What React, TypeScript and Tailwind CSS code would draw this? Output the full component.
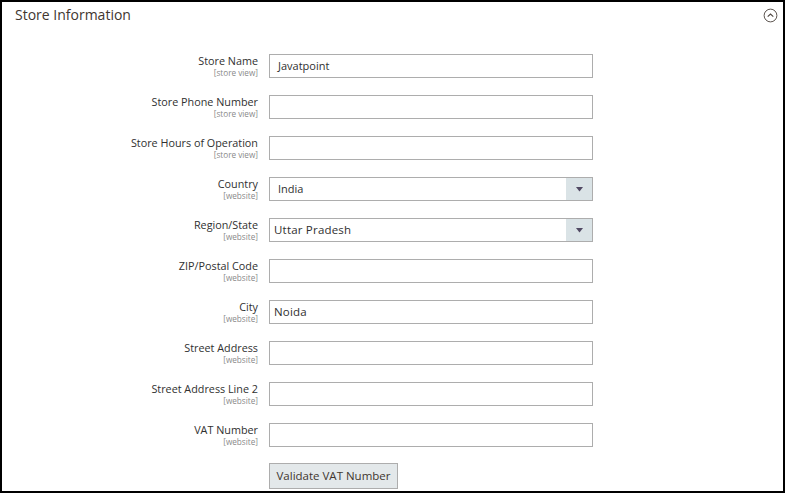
type Field = {
  label: string
  scope: string
  value?: string
  select?: boolean
  plain?: boolean
}

const FIELDS: Field[] = [
  { label: 'Store Name', scope: '[store view]', value: 'Javatpoint' },
  { label: 'Store Phone Number', scope: '[store view]' },
  { label: 'Store Hours of Operation', scope: '[store view]' },
  { label: 'Country', scope: '[website]', value: 'India', select: true },
  { label: 'Region/State', scope: '[website]', value: 'Uttar Pradesh', select: true, plain: true },
  { label: 'ZIP/Postal Code', scope: '[website]' },
  { label: 'City', scope: '[website]', value: 'Noida', plain: true },
  { label: 'Street Address', scope: '[website]' },
  { label: 'Street Address Line 2', scope: '[website]' },
  { label: 'VAT Number', scope: '[website]' },
]

function FieldRow({ field }: { field: Field }) {
  return (
    <div className="flex items-start gap-[11px] mb-[17px]">
      <div className="w-[256px] pt-[1px] text-right">
        <p className="text-[10.8px] leading-[12px] text-[#303030]">{field.label}</p>
        <p className="text-[8.2px] leading-[11px] text-[#8a8a8a]">{field.scope}</p>
      </div>
      <div className="relative flex h-[24px] w-[324px] items-center border border-[#adadad] bg-white">
        <span
          className={`text-[#303030] ${
            field.plain ? 'pl-[4px] text-[11.5px] tracking-[0.2px]' : 'pl-[8px] text-[11px]'
          }`}
        >
          {field.value}
        </span>
        {field.select && (
          <div className="absolute right-0 top-0 flex h-full w-[26px] items-center justify-center bg-[#dae3e6]">
            <svg width="7" height="5" viewBox="0 0 7 5">
              <path d="M0 0h7L3.5 4.5z" fill="#514963" />
            </svg>
          </div>
        )}
      </div>
    </div>
  )
}

export default function App() {
  return (
    <div className="h-[495px] w-[785px] bg-white" style={{ fontFamily: '"Open Sans", sans-serif' }}>
      <div className="h-[493px] w-[785px] border-2 border-black">
        <div className="flex items-center justify-between pl-[13px] pr-[5px] pt-[1px]">
          <h2 className="text-[14px] leading-[24px] text-[#41362f]">Store Information</h2>
          <svg width="15" height="15" viewBox="0 0 16 16" className="mt-[1px]">
            <circle cx="8" cy="8" r="6.8" fill="none" stroke="#514943" strokeWidth="1" />
            <path d="M5 9.3L8 6.4l3 2.9" fill="none" stroke="#514943" strokeWidth="1.2" />
          </svg>
        </div>
        <div className="mt-[27px]">
          {FIELDS.map((f) => (
            <FieldRow key={f.label} field={f} />
          ))}
          <div className="ml-[267px] -mt-[2px]">
            <button
              type="button"
              className="h-[26px] w-[129px] border border-[#adadad] bg-[#e3e8ea] text-[11.5px] text-[#41362f]"
            >
              Validate VAT Number
            </button>
          </div>
        </div>
      </div>
    </div>
  )
}
